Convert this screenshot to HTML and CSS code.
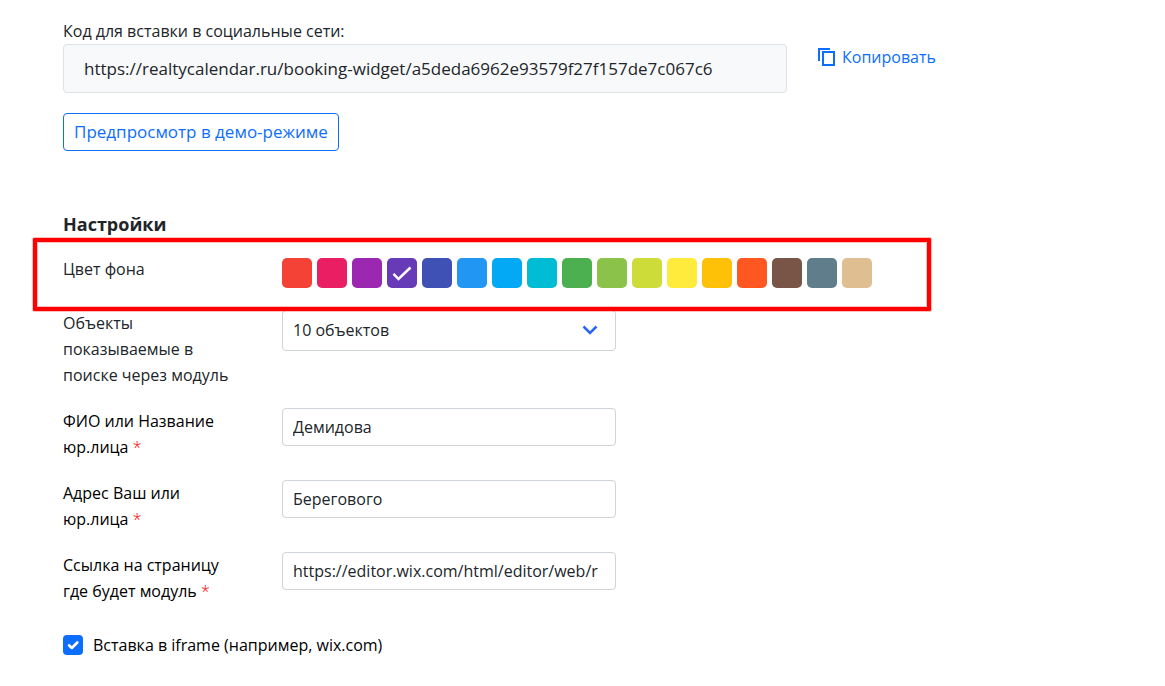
FILE: index.html
```html
<!DOCTYPE html>
<html lang="ru">
<head>
<meta charset="utf-8">
<meta name="viewport" content="width=device-width, initial-scale=1">
<title>Настройки</title>
<link rel="stylesheet" href="styles.css">
</head>
<body>
<main class="page">
  <section class="share">
    <div class="share-code">
      <label for="code">Код для вставки в социальные сети:</label>
      <input class="code" id="code" type="text" readonly value="https://realtycalendar.ru/booking-widget/a5deda6962e93579f27f157de7c067c6">
    </div>
    <a class="copy" href="#">
      <svg class="copy-icon" viewBox="0 0 18 20" aria-hidden="true"><path d="M1 14V2H12M5 5H16V18H5Z" fill="none" stroke="currentColor" stroke-width="2"/></svg>
      Копировать
    </a>
  </section>
  <button class="preview" type="button">Предпросмотр в демо-режиме</button>

  <h2 class="title">Настройки</h2>
  <form class="settings">
    <div class="row row-color" role="radiogroup" aria-labelledby="color-label">
      <span id="color-label">Цвет фона</span>
      <div class="swatches">
        <input class="swatch red" type="radio" name="color" aria-label="Красный">
        <input class="swatch pink" type="radio" name="color" aria-label="Розовый">
        <input class="swatch purple" type="radio" name="color" aria-label="Пурпурный">
        <span class="tick-wrap">
          <input class="swatch violet" type="radio" name="color" aria-label="Фиолетовый" checked>
          <svg class="tick" viewBox="0 0 30 30" aria-hidden="true"><path d="M6.500 15.800L11.500 21L23.500 9.500" fill="none" stroke="#fff" stroke-width="2.500"/></svg>
        </span>
        <input class="swatch indigo" type="radio" name="color" aria-label="Индиго">
        <input class="swatch blue" type="radio" name="color" aria-label="Синий">
        <input class="swatch sky" type="radio" name="color" aria-label="Голубой">
        <input class="swatch cyan" type="radio" name="color" aria-label="Бирюзовый">
        <input class="swatch green" type="radio" name="color" aria-label="Зелёный">
        <input class="swatch light-green" type="radio" name="color" aria-label="Светло-зелёный">
        <input class="swatch lime" type="radio" name="color" aria-label="Лайм">
        <input class="swatch yellow" type="radio" name="color" aria-label="Жёлтый">
        <input class="swatch amber" type="radio" name="color" aria-label="Янтарный">
        <input class="swatch orange" type="radio" name="color" aria-label="Оранжевый">
        <input class="swatch brown" type="radio" name="color" aria-label="Коричневый">
        <input class="swatch slate" type="radio" name="color" aria-label="Серый">
        <input class="swatch sand" type="radio" name="color" aria-label="Песочный">
      </div>
      <div class="highlight"></div>
    </div>
    <div class="row">
      <label for="objects">Объекты показываемые в поиске через модуль</label>
      <div class="select-wrap">
        <select class="field select" id="objects"><option>10 объектов</option></select>
        <svg class="chevron" viewBox="0 0 16 10" aria-hidden="true"><path d="M1.500 1.500L8 8L14.500 1.500" fill="none" stroke="currentColor" stroke-width="2.500"/></svg>
      </div>
    </div>
    <div class="row">
      <label class="dark" for="name">ФИО или Название юр.лица <span class="required">*</span></label>
      <input class="field" id="name" type="text" value="Демидова">
    </div>
    <div class="row">
      <label class="dark" for="address">Адрес Ваш или юр.лица <span class="required">*</span></label>
      <input class="field" id="address" type="text" value="Берегового">
    </div>
    <div class="row">
      <label class="dark" for="link">Ссылка на страницу где будет модуль <span class="required">*</span></label>
      <input class="field" id="link" type="text" value="https://editor.wix.com/html/editor/web/r">
    </div>
    <div class="check-row">
      <span class="tick-wrap">
        <input class="check" id="iframe" type="checkbox" checked>
        <svg class="tick" viewBox="0 0 20 20" aria-hidden="true"><path d="M6 10.300L8.800 13L14.300 7.500" fill="none" stroke="#fff" stroke-width="2.600" stroke-linecap="round" stroke-linejoin="round"/></svg>
      </span>
      <label class="dark" for="iframe">Вставка в iframe (например, wix.com)</label>
    </div>
  </form>
</main>
</body>
</html>
```

FILE: styles.css
```css
* { box-sizing: border-box; }

body {
  margin: 0;
  background: #fff;
  color: #212529;
  font: 16px/26px "Open Sans", "Noto Sans", sans-serif;
}

input, select, button { font: inherit; color: inherit; margin: 0; }

.page { padding: 18px 63px 28px; }

.share {
  display: grid;
  grid-template-columns: minmax(0, 724px) auto;
  justify-content: start;
  column-gap: 31px;
}

.share-code { display: flex; flex-direction: column; }

.code {
  width: 100%;
  height: 49px;
  padding: 0 20px;
  border: 1px solid #dee2e6;
  border-radius: 4px;
  background: #f8f9fa;
  font-size: 17px;
}

.copy {
  display: flex;
  align-items: center;
  align-self: start;
  gap: 6px;
  padding-top: 26px;
  color: #0d6efd;
  text-decoration: none;
}

.copy-icon { width: 18px; height: 20px; }

.preview {
  display: block;
  height: 38px;
  margin-top: 20px;
  padding: 0 10px;
  border: 1px solid #0d6efd;
  border-radius: 4px;
  background: #fff;
  color: #0d6efd;
  font-size: 17px;
}

.title {
  margin: 60px 0 19px;
  font-size: 18px;
  line-height: 26px;
  font-weight: 700;
}

.settings { display: flex; flex-direction: column; gap: 20px; }

.row {
  display: grid;
  grid-template-columns: 180px minmax(0, 334px);
  column-gap: 39px;
  align-items: start;
}

.row-color {
  position: relative;
  grid-template-columns: 180px minmax(0, 1fr);
  max-width: 868px;
  padding-bottom: 2px;
}

.swatches { display: flex; flex-wrap: wrap; gap: 5px; padding-top: 2px; }

.swatch {
  appearance: none;
  display: block;
  width: 30px;
  height: 30px;
  border-radius: 5px;
}

.red { background: #f44336; }
.pink { background: #e91e63; }
.purple { background: #9c27b0; }
.violet { background: #673ab7; }
.indigo { background: #3f51b5; }
.blue { background: #2196f3; }
.sky { background: #03a9f4; }
.cyan { background: #00bcd4; }
.green { background: #4caf50; }
.light-green { background: #8bc34a; }
.lime { background: #cddc39; }
.yellow { background: #ffeb3b; }
.amber { background: #ffc107; }
.orange { background: #ff5722; }
.brown { background: #795548; }
.slate { background: #607d8b; }
.sand { background: #dfbe92; }

.tick-wrap { position: relative; display: block; }

.tick { position: absolute; inset: 0; pointer-events: none; }

.highlight {
  position: absolute;
  z-index: 1;
  inset: -18px 0 -21px -30px;
  border: 4px solid #f00;
  border-radius: 1px;
  box-shadow: 0 0 0 1px #ff000040, inset 0 0 0 1px #ff000040;
  pointer-events: none;
}

.field {
  width: 100%;
  height: 38px;
  padding: 0 10px;
  border: 1px solid #ced4da;
  border-radius: 4px;
  background: #fff;
}

.select-wrap { position: relative; }

.select { appearance: none; display: block; height: 41px; padding-bottom: 2px; }

.chevron {
  position: absolute;
  top: 15px;
  right: 18px;
  width: 16px;
  height: 10px;
  color: #2a67f5;
  pointer-events: none;
}

.dark { color: #000; }

.required { color: #f00; font-weight: 300; }

.check-row {
  display: flex;
  align-items: center;
  gap: 10px;
  margin-top: 8px;
}

.check {
  appearance: none;
  display: block;
  width: 20px;
  height: 20px;
  border-radius: 4px;
  background: #0d6efd;
}
```
